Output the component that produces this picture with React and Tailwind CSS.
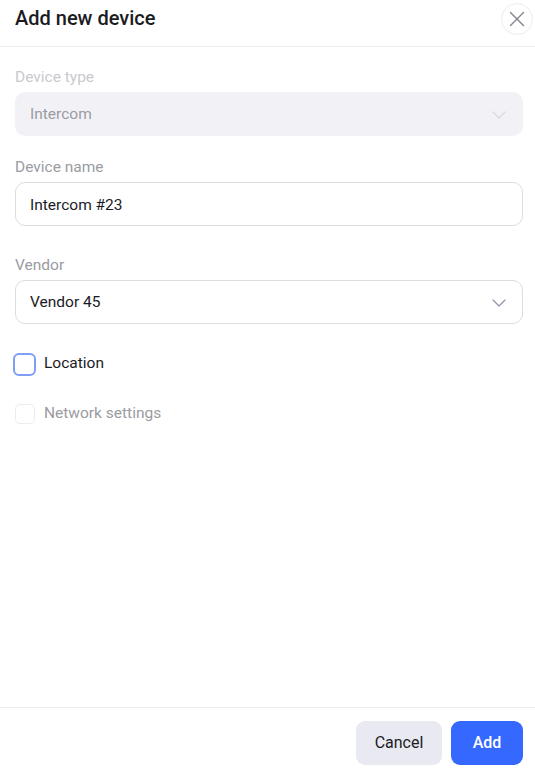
import { ChevronDown, X } from 'lucide-react'

function Label({ children, muted }) {
  return (
    <label className={`block text-[15.5px] leading-6 mb-[3px] ${muted ? 'text-[#c9c9ce]' : 'text-[#9b9ba2]'}`}>
      {children}
    </label>
  )
}

export default function App() {
  return (
    <div className="flex h-[775px] w-full flex-col bg-white text-[#1b1b1f]" style={{ fontFamily: 'Roboto, "Liberation Sans", sans-serif' }}>
      <div className="flex items-start justify-between border-b border-[#ececf0] pl-[15px] pr-[2px] pt-[3px] pb-[11px]">
        <h1 className="mt-[1px] text-[20px] font-medium leading-7 text-[#1b1b1f]">Add new device</h1>
        <button className="flex h-8 w-8 items-center justify-center rounded-full border border-[#ececf0] text-[#85858d]">
          <X size={26} strokeWidth={1.3} />
        </button>
      </div>

      <div className="flex-1 pl-[15px] pr-[12px] pt-[18px]">
        <Label muted>Device type</Label>
        <div className="flex h-11 items-center justify-between rounded-[10px] bg-[#f2f2f6] pl-[15px] pr-[12px] pt-[1px] text-[15.5px] text-[#9b9ba2]">
          <span>Intercom</span>
          <ChevronDown size={24} strokeWidth={1.2} className="text-[#d8d8de]" />
        </div>

        <div className="mt-[19px]">
          <Label>Device name</Label>
          <input
            defaultValue="Intercom #23"
            className="h-11 w-full rounded-[10px] border border-[#dcdce2] px-[14px] pt-[1px] text-[15.5px] text-[#1b1b1f] outline-none"
          />
        </div>

        <div className="mt-[27px]">
          <Label>Vendor</Label>
          <div className="flex h-11 items-center justify-between rounded-[10px] border border-[#dcdce2] pl-[14px] pr-[11px] pt-[1px] text-[15.5px]">
            <span>Vendor 45</span>
            <ChevronDown size={24} strokeWidth={1.2} className="text-[#8a94a6]" />
          </div>
        </div>

        <div className="mt-[28px] flex h-6 items-center gap-2">
          <span className="-ml-[2px] h-[23px] w-[23px] rounded-[6px] border-2 border-[#7e9ef7]" />
          <span className="text-[15.5px]">Location</span>
        </div>

        <div className="mt-[26px] flex h-6 items-center gap-[9px]">
          <span className="h-5 w-5 rounded-[5px] border border-[#ececf0]" />
          <span className="text-[15.5px] text-[#9b9ba2]">Network settings</span>
        </div>
      </div>

      <div className="flex justify-end gap-[9px] border-t border-[#ececf0] px-3 pt-[13px] pb-[10px]">
        <button className="h-11 w-[86px] rounded-[9px] bg-[#e9e9f1] text-[16px] text-[#1b1b1f]">Cancel</button>
        <button className="h-11 w-[72px] rounded-[9px] bg-[#3468ff] text-[16px] font-medium text-white">Add</button>
      </div>
    </div>
  )
}
